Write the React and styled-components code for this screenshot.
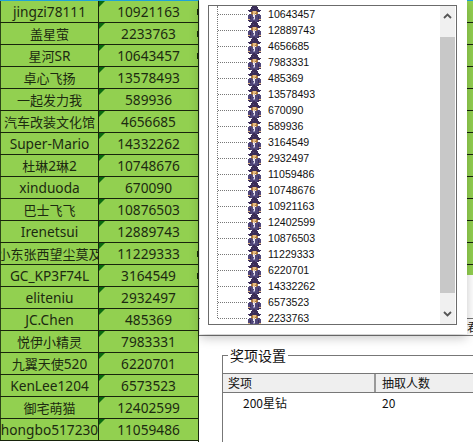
import React from "react";
import styled, { createGlobalStyle } from "styled-components";

const Global = createGlobalStyle`
  html, body { margin: 0; padding: 0; background: #fff; }
  body { font-family: "Liberation Sans", "Noto Sans CJK SC", sans-serif; }
`;

const players = [
  ["jingzi78111", "10921163", true], ["盖星萤", "2233763", true], ["星河SR", "10643457", true], ["卓心飞扬", "13578493"],
  ["一起发力我", "589936"], ["汽车改装文化馆", "4656685"], ["Super-Mario", "14332262"], ["杜琳2琳2", "10748676"],
  ["xinduoda", "670090"], ["巴士飞飞", "10876503"], ["Irenetsui", "12889743"], ["小东张西望尘莫及", "11229333", true],
  ["GC_KP3F74L", "3164549", true], ["eliteniu", "2932497"], ["JC.Chen", "485369"], ["悦伊小精灵", "7983331"],
  ["九翼天使520", "6220701"], ["KenLee1204", "6573523"], ["御宅萌猫", "12402599"], ["hongbo517230", "11059486"],
];

const treeIds = ["10643457", "12889743", "4656685", "7983331", "485369", "13578493", "670090", "589936", "3164549",
  "2932497", "11059486", "10748676", "10921163", "12402599", "10876503", "11229333", "6220701", "14332262", "6573523", "2233763"];

const Page = styled.div`
  position: relative;
  display: flex;
  width: 473px;
  height: 442px;
  overflow: hidden;
  background: #fff;
`;

const Sheet = styled.div`
  flex: 0 0 199px;
  display: flex;
  flex-direction: column;
  box-sizing: border-box;
  border-top: 1px solid #1fa3d8;
  border-right: 1px solid #1b2a10;
  font-family: "Noto Sans", sans-serif;
`;

const SheetRow = styled.div`
  flex: 0 0 22px;
  display: grid;
  grid-template-columns: 99px 99px;
  box-sizing: border-box;
  background: #92d050;
  border-bottom: 1px solid #18240c;
  color: #1c2a10;
  font-size: 13.7px;
  line-height: 21px;
`;

const NameCell = styled.div`
  overflow: hidden;
  white-space: nowrap;
  display: flex;
  justify-content: center;
  border-left: 1px solid #2c4418;
  border-right: 1px solid #18240c;
`;

const IdCell = styled.div`
  position: relative;
  text-align: center;
  &::before {
    content: "";
    position: absolute;
    left: 0;
    top: 0;
    border-top: 6px solid #0a6a10;
    border-right: 6px solid transparent;
  }
  &::after {
    content: "";
    display: ${(p) => (p.$tick ? "block" : "none")};
    position: absolute;
    right: -1px;
    top: 8px;
    width: 2px;
    height: 6px;
    background: #1b2a10;
  }
`;

const Han = styled.span`
  font-family: "Noto Sans CJK SC", sans-serif;
  font-size: 13px;
`;

const Side = styled.div`
  flex: 1;
  display: flex;
  flex-direction: column;
  min-width: 0;
`;

const SideTop = styled.div`
  flex: 0 0 318px;
  display: flex;
  justify-content: flex-end;
  align-items: flex-start;
`;

const GreenStrip = styled.div`
  flex: 0 0 6px;
  height: 275px;
  overflow: hidden;
  border-top: 1px solid #1fa3d8;
  box-sizing: border-box;
`;

const StripRow = styled.div`
  height: 22px;
  box-sizing: border-box;
  background: #92d050;
  border-bottom: 1px solid #18240c;
`;

const PeekRow = styled.div`
  flex: 0 0 16px;
  display: flex;
  justify-content: flex-end;
  border-top: 1px solid #777;
  border-bottom: 1px solid #777;
  overflow: hidden;
  font: 12px/15px "Noto Sans CJK SC", sans-serif;
  color: #222;
`;

const PeekText = styled.span`
  width: 6px;
  white-space: nowrap;
`;

const Group = styled.fieldset`
  margin: 10px 0 0 23px;
  padding: 0;
  flex: 1;
  min-width: 0;
  border: 1px solid #777;
  border-right: 0;
  border-bottom: 0;
`;

const Legend = styled.legend`
  margin-left: 5px;
  padding: 0 2px;
  font: 14px/18px "Noto Sans CJK SC", sans-serif;
  color: #111;
`;

const TableRow = styled.div`
  display: grid;
  grid-template-columns: 153px 1fr;
  margin-top: ${(p) => (p.$head ? "9px" : "0")};
  height: ${(p) => (p.$head ? "20px" : "22px")};
  box-sizing: border-box;
  background: ${(p) => (p.$head ? "#efefef" : "transparent")};
  border-top: ${(p) => (p.$head ? "1px solid #777" : "0")};
  border-bottom: ${(p) => (p.$head ? "1px solid #777" : "0")};
  font: 12px/18px "Noto Sans CJK SC", sans-serif;
  color: #111;
`;

const HeadCell = styled.div`
  padding-left: ${(p) => (p.$first ? "5px" : "6px")};
  border-right: ${(p) => (p.$first ? "2px solid #999" : "0")};
  white-space: nowrap;
`;

const BodyCell = styled.div`
  padding: 1px 0 0 ${(p) => (p.$first ? "20px" : "6px")};
  white-space: nowrap;
`;

const Popup = styled.div`
  position: absolute;
  left: 200px;
  top: 0;
  width: 267px;
  height: 334px;
  box-sizing: border-box;
  padding: 5px 10px 9px 8px;
  background: #fff;
  box-shadow: 0 4px 10px rgba(0, 0, 0, 0.22);
`;

const ListBox = styled.div`
  display: flex;
  height: 100%;
  box-sizing: border-box;
  border: 1px solid #6b6b6b;
  overflow: hidden;
`;

const Tree = styled.div`
  position: relative;
  flex: 1;
  &::before {
    content: "";
    position: absolute;
    left: 8px;
    top: 0;
    height: 312px;
    border-left: 1px dotted #777;
  }
`;

const TreeRow = styled.div`
  height: 16px;
  display: flex;
  align-items: center;
  padding-left: 9px;
  font: 10.6px/16px "Liberation Sans", sans-serif;
  color: #111;
`;

const Branch = styled.span`
  width: 29px;
  border-top: 1px dotted #777;
`;

const Sprite = styled.svg`
  display: block;
  flex: none;
  width: 16px;
  height: 16px;
  shape-rendering: crispEdges;
`;

const TreeLabel = styled.span`
  margin-left: 5px;
`;

const Scrollbar = styled.div`
  flex: 0 0 15px;
  display: flex;
  flex-direction: column;
  margin-right: 1px;
  background: #f0f0f0;
`;

const ScrollArrow = styled.div`
  flex: 0 0 31px;
  display: flex;
  justify-content: center;
  align-items: ${(p) => (p.$down ? "flex-end" : "flex-start")};
  padding: ${(p) => (p.$down ? "0 0 7px" : "7px 0 0")};
  box-sizing: border-box;
  color: #555;
  & svg { display: block; }
`;

const Thumb = styled.div`
  flex: 1;
  background: #c8c8c8;
`;

const spriteMap = [
  ".....KKKKK......",
  "....KKKKKKK.....",
  "....KKPKKKK.....",
  "...KKKKKKKKK....",
  ".KKKKKKKKKKKKK..",
  "..KKKHFFFHKKK...",
  "....HHFFFHH.....",
  "....HHFFHHH.....",
  "..PPPHWFWHPPP...",
  ".PPPPPWWPPPPPP..",
  ".PPKPPWWPPPKPP..",
  ".PPKPPPWPPPKPP..",
  ".PPKPPLWPPPKPP..",
  ".FFPPPLLPPPPFF..",
  ".KKPPPPPPPPKKK..",
  "..KKPPKKPPKK....",
];

const spriteColors = { K: "#3b2d58", P: "#4f4679", F: "#e6bb82", H: "#a9773f", W: "#e8e4ee", L: "#8f88b5" };

function CharacterIcon() {
  return (
    <Sprite viewBox="0 0 16 16" aria-hidden="true">
      {spriteMap.flatMap((row, y) =>
        row.split("").map((c, x) => (c === "." ? null : <rect key={`${x}-${y}`} x={x} y={y} width="1" height="1" fill={spriteColors[c]} />))
      )}
    </Sprite>
  );
}

function Chevron({ down }) {
  return (
    <svg width="9" height="6" viewBox="0 0 9 6" fill="none" stroke="currentColor" strokeWidth="1.8">
      <path d={down ? "M1 1l3.5 3.5L8 1" : "M1 5l3.5-3.5L8 5"} />
    </svg>
  );
}

function Name({ text }) {
  const parts = text.match(/[\u4e00-\u9fff]+|[^\u4e00-\u9fff]+/g);
  return (
    <span>
      {parts.map((p, i) => (/[\u4e00-\u9fff]/.test(p) ? <Han key={i}>{p}</Han> : <React.Fragment key={i}>{p}</React.Fragment>))}
    </span>
  );
}

export default function App() {
  return (
    <Page>
      <Global />
      <Sheet>
        {players.map(([name, id, tick]) => (
          <SheetRow key={id}>
            <NameCell><Name text={name} /></NameCell>
            <IdCell $tick={tick}>{id}</IdCell>
          </SheetRow>
        ))}
      </Sheet>
      <Side>
        <SideTop>
          <GreenStrip>
            {players.slice(0, 13).map(([, id]) => <StripRow key={id} />)}
          </GreenStrip>
        </SideTop>
        <PeekRow><PeekText>君</PeekText></PeekRow>
        <Group>
          <Legend>奖项设置</Legend>
          <TableRow $head>
            <HeadCell $first>奖项</HeadCell>
            <HeadCell>抽取人数</HeadCell>
          </TableRow>
          <TableRow>
            <BodyCell $first>200星钻</BodyCell>
            <BodyCell>20</BodyCell>
          </TableRow>
        </Group>
      </Side>
      <Popup>
        <ListBox>
          <Tree>
            {treeIds.map((id) => (
              <TreeRow key={id}>
                <Branch />
                <CharacterIcon />
                <TreeLabel>{id}</TreeLabel>
              </TreeRow>
            ))}
          </Tree>
          <Scrollbar>
            <ScrollArrow><Chevron /></ScrollArrow>
            <Thumb />
            <ScrollArrow $down><Chevron down /></ScrollArrow>
          </Scrollbar>
        </ListBox>
      </Popup>
    </Page>
  );
}
